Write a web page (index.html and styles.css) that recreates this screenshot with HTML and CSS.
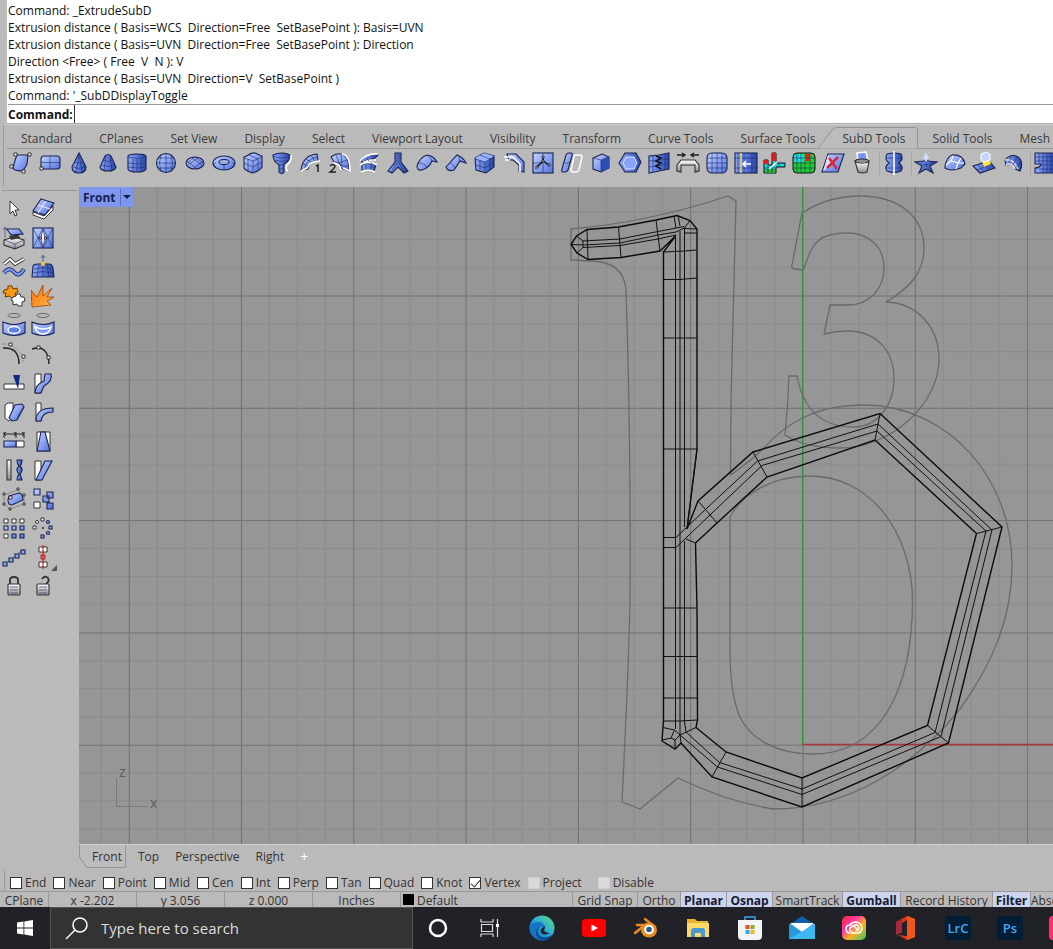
FILE: index.html
```html
<!DOCTYPE html>
<html lang="en">
<head>
    <meta charset="UTF-8">
    <meta name="viewport" content="width=device-width, initial-scale=1.0">
    <title>Rhinoceros - Front</title>
    <link rel="stylesheet" href="styles.css">
</head>
<body>
    <svg class="defs" aria-hidden="true">
        <defs>
            <linearGradient id="blue" x1="0" y1="0" x2="1" y2="1">
                <stop offset="0" stop-color="#c6d4ff"/>
                <stop offset="1" stop-color="#4f72e0"/>
            </linearGradient>
            <linearGradient id="steel" x1="0" y1="0" x2="1" y2="0">
                <stop offset="0" stop-color="#8fa9ff"/>
                <stop offset="1" stop-color="#2746ac"/>
            </linearGradient>
            <linearGradient id="silver" x1="0" y1="0" x2="0" y2="1">
                <stop offset="0" stop-color="#ffffff"/>
                <stop offset="1" stop-color="#8d8d8d"/>
            </linearGradient>
            <linearGradient id="fire" x1="0" y1="0" x2="1" y2="1">
                <stop offset="0" stop-color="#ff6a00"/>
                <stop offset="1" stop-color="#ffb84d"/>
            </linearGradient>
            <linearGradient id="edge" x1="0" y1="1" x2="1" y2="0">
                <stop offset="0" stop-color="#0c59a4"/>
                <stop offset="0.5" stop-color="#2aa9e0"/>
                <stop offset="1" stop-color="#61dc7a"/>
            </linearGradient>
            <linearGradient id="rainbow" x1="0" y1="0" x2="1" y2="1">
                <stop offset="0" stop-color="#ff1f3a"/>
                <stop offset="0.35" stop-color="#ff3ca6"/>
                <stop offset="0.6" stop-color="#ffb020"/>
                <stop offset="1" stop-color="#35c96a"/>
            </linearGradient>
        </defs>
    </svg>

    <div class="command">
        <div class="history">
            <div>Command: _ExtrudeSubD</div>
            <div>Extrusion distance ( Basis=WCS  Direction=Free  SetBasePoint ): Basis=UVN</div>
            <div>Extrusion distance ( Basis=UVN  Direction=Free  SetBasePoint ): Direction</div>
            <div>Direction &lt;Free&gt; ( Free  V  N ): V</div>
            <div>Extrusion distance ( Basis=UVN  Direction=V  SetBasePoint )</div>
            <div>Command: '_SubDDisplayToggle</div>
        </div>
        <div class="prompt">
            <label for="command-line">Command:</label>
            <input id="command-line" type="text">
        </div>
    </div>

    <div class="toolbar">
        <div class="tabs">
            <button>Standard</button>
            <button>CPlanes</button>
            <button>Set View</button>
            <button>Display</button>
            <button>Select</button>
            <button>Viewport Layout</button>
            <button>Visibility</button>
            <button>Transform</button>
            <button>Curve Tools</button>
            <button>Surface Tools</button>
            <button class="active">
                <svg class="tab-shape" viewBox="0 0 100 22" preserveAspectRatio="none"><path d="M0 21.500L14 3Q16 .5 19 .5H97Q99.500 .5 99.500 3V21.500"/></svg>
                <span>SubD Tools</span>
            </button>
            <button>Solid Tools</button>
            <button>Mesh Tools</button>
        </div>
        <div class="tools">
            <button aria-label="Single SubD face"><svg viewBox="0 0 24 24"><path class="b" d="M8 4H19L18 13 14 20Q5 20 4 17Q5 12 8 4Z"/><path class="w" d="M5 2h3v3H5zM19 2h3v3h-3zM1 14h3v3H1zM13 19h3v3h-3z"/></svg></button>
            <button aria-label="SubD plane"><svg viewBox="0 0 24 24"><rect class="b" x="3" y="5" width="19" height="13" rx="3"/><path class="l" d="M12 5V18M3 11.500H22"/><path class="w" d="M2 16h3v3H2z"/></svg></button>
            <button aria-label="SubD cone"><svg viewBox="0 0 24 24"><path class="s" d="M12 2L19 16Q19 22 12 22T5 16Z"/><path class="l" d="M12 3L9 21M12 3L15 21M8 11Q12 13 16 11M6 16Q12 19 18 16"/></svg></button>
            <button aria-label="SubD truncated cone"><svg viewBox="0 0 24 24"><path class="s" d="M9 5Q12 2 15 5L20 16Q19 20 12 20T4 16Z"/><path class="l" d="M10 5L8 19M14 5L16 19M7 9Q12 12 17 9M5 14Q12 17 19 14"/></svg></button>
            <button aria-label="SubD cylinder"><svg viewBox="0 0 24 24"><path class="s" d="M3 5Q4 3 12 3T21 5V18Q20 21 12 21T3 18Z"/><path class="l" d="M3 6Q12 9 21 6M8 8V21M12 8V21M16 8V21M3 12Q12 14 21 12M3 16Q12 18 21 16"/></svg></button>
            <button aria-label="SubD sphere"><svg viewBox="0 0 24 24"><circle class="b" cx="12" cy="12" r="9.500"/><path class="l" d="M12 2V22M2 12H22M7 3Q4 12 7 21M17 3Q20 12 17 21M4 7H20M4 17H20"/></svg></button>
            <button aria-label="SubD ellipsoid"><svg viewBox="0 0 24 24"><ellipse class="b" cx="12" cy="12" rx="9" ry="6"/><path class="l" d="M4 10L14 18M8 6L19 14M20 10L10 18M16 6L5 14M12 6L4 12M12 6L20 12"/></svg></button>
            <button aria-label="SubD torus"><svg viewBox="0 0 24 24"><ellipse class="b" cx="12" cy="12" rx="11" ry="7"/><ellipse cx="12" cy="11" rx="5" ry="2.500" fill="#9fb0e0" stroke="#101a50"/><path class="l" d="M12 14V19M4 12L1 13M20 12L23 13"/></svg></button>
            <button aria-label="SubD box"><svg viewBox="0 0 24 24"><path class="b" d="M4 6Q11 1 14 2L21 5V16Q19 20 11 22Q4 19 3 17V6Z"/><path class="l" d="M3 7L12 10 21 6M12 10V22M3 12L12 16 21 11M8 4L17 8V19M7 8V20"/></svg></button>
            <button aria-label="SubD loft"><svg viewBox="0 0 24 24"><path class="s" d="M3 4Q12 0 20 4Q20 10 14 13V21Q11 24 9 21V14Q3 10 3 4Z"/><path class="l" d="M3 5Q12 9 20 5M5 9Q12 12 18 9M9 14H14M9 18H14"/><path class="h" d="M21 4Q22 9 18 13T18 20"/></svg></button>
            <button aria-label="SubD sweep 1"><svg viewBox="0 0 24 24"><path class="b" d="M2 19Q4 4 18 3L19 10Q11 10 9 18Z"/><path class="l" d="M7 8L14 12M12 4L16 11M4 13L10 15M5 19Q7 8 18 6"/><path class="h" d="M2 20L8 17Q11 10 21 10"/><path d="M17 15l2-1v7" fill="none" stroke="#222" stroke-width="1.500"/></svg></button>
            <button aria-label="SubD sweep 2"><svg viewBox="0 0 24 24"><path class="b" d="M3 6Q8 2 13 3Q21 4 21 20L13 17Q13 11 6 11Z"/><path class="l" d="M8 4L11 12M13 4L14 15M19 9L11 12M21 15H14"/><path class="h" d="M14 3Q22 4 22 20L15 17M5 12Q12 12 13 19"/><path d="M2 15q3-3 5 0q0 2-5 6h6" fill="none" stroke="#222" stroke-width="1.500"/></svg></button>
            <button aria-label="SubD revolve"><svg viewBox="0 0 24 24"><path class="s" d="M4 10Q10 2 21 4L17 8Q9 8 6 12ZM5 14Q12 10 19 14L17 20Q11 17 5 20Z"/><path class="h" d="M3 10Q10 2 21 3M6 12Q12 8 19 9M3 14Q12 9 20 14M4 21Q11 17 18 21"/><path class="l" d="M9 7L12 10M15 5L16 9M9 13V18M14 12V18"/></svg></button>
            <button aria-label="Multipipe"><svg viewBox="0 0 24 24"><path class="s" d="M9 2H15V11L22 20 18 22 12 16 6 22 2 20 9 11Z"/><path class="l" d="M11 2V12L5 21M13 2V12L19 21"/></svg></button>
            <button aria-label="Extend"><svg viewBox="0 0 24 24"><path class="b" d="M2 15Q5 6 12 4Q19 5 22 11L17 10Q14 17 7 19Q2 20 2 15Z"/><path class="l" d="M4 12Q10 12 12 17M12 4Q16 6 17 10"/></svg></button>
            <button aria-label="Offset"><svg viewBox="0 0 24 24"><path class="b" d="M2 16L13 4Q19 6 22 12L16 10 10 19Q4 21 2 16Z"/><path class="l" d="M13 4Q16 6 16 10M6 12Q10 14 11 17"/></svg></button>
            <button aria-label="Box shape"><svg viewBox="0 0 24 24"><path class="s" d="M2 7L11 2 21 5V16L13 22 3 19Z"/><path d="M2 7L11 2 21 5 12 11Z" fill="#9db3ff"/><path class="l" d="M2 8L12 11 21 6M12 11V22M7 9V20M3 14L12 17 21 11M17 8V19M7 4L17 8"/></svg></button>
            <button aria-label="Bevel"><svg viewBox="0 0 24 24"><path class="b" d="M5 3H14L22 11V21L17 20V14L11 9H7Z"/><path class="h" d="M2 6H11L18 13V21M3 9H8"/></svg></button>
            <button aria-label="Insert point"><svg viewBox="0 0 24 24"><rect class="b" x="2" y="2" width="20" height="20"/><path class="l" d="M12 2V10L4 18M12 10L19 15M2 12H12M12 10V22"/><path d="M12 6V10L6 16M12 10L18 14" fill="none" stroke="#111" stroke-width="1.500"/><path class="w" d="M11 5h2v2h-2zM11 9h2v2h-2zM5 15h2v2H5zM17 13h2v2h-2z"/></svg></button>
            <button aria-label="Mirror SubD"><svg viewBox="0 0 24 24"><path d="M14 6Q14 4 16 4H20Q22 4 22 6L19 19Q18 21 16 21H13Q11 21 11 19Z" fill="none" stroke="#fff" stroke-width="1.500"/><path class="b" d="M6 4Q7 2 9 2H11Q13 2 12 5L8 19Q7 21 5 21H3Q1 21 2 18Z"/><path class="l" d="M4 11Q7 14 10 11"/></svg></button>
            <button aria-label="Box"><svg viewBox="0 0 24 24"><path class="b" d="M4 7L13 3 20 6V17L12 21 4 18Z"/><path d="M12 9L20 6V17L12 21Z" fill="#2d4eb8"/><path class="l" d="M4 7L12 9 20 6M12 9V21"/></svg></button>
            <button aria-label="Toggle display"><svg viewBox="0 0 24 24"><path class="s" d="M7 2H18L23 11 18 21H7L1 12Z"/><path d="M8 6H16L19 12 16 18H8L5 12Z" fill="#88a4fa" stroke="#dfe7ff"/></svg></button>
            <button aria-label="Stitch"><svg viewBox="0 0 24 24"><path class="s" d="M2 5L12 4 22 2V18L12 20 2 22Z"/><path class="l" d="M6 4V21M18 3V19M2 10L22 8M2 16L22 13"/><path d="M9 5l5 2-5 3 5 2-5 3 5 3" fill="none" stroke="#111" stroke-width="1.500"/></svg></button>
            <button aria-label="Bridge"><svg viewBox="0 0 24 24"><path d="M1 4H9M15 4H23M6 2L9 4 6 6M18 2L15 4 18 6" fill="none" stroke="#222" stroke-width="1.500"/><path class="g" d="M1 14L5 9H19L23 14V20L19 21V14H5V21L1 20Z"/></svg></button>
            <button aria-label="Subdivide"><svg viewBox="0 0 24 24"><rect class="b" x="2" y="2" width="20" height="20" rx="5"/><path class="l" d="M7 2V22M12 2V22M17 2V22M2 7H22M2 12H22M2 17H22"/></svg></button>
            <button aria-label="Slide edge"><svg viewBox="0 0 24 24"><rect class="s" x="1" y="2" width="22" height="20"/><path class="l" d="M4 2V22M10 2V22M18 2V22M0 7H24M0 17H24"/><path d="M7 2V22" stroke="#e8d850" stroke-width="1.500"/><path class="h" d="M17 13H9M12 10L9 13 12 16"/></svg></button>
            <button aria-label="Show extracted"><svg viewBox="0 0 24 24"><path d="M9 2H13V12H22V16H13V22H1V9H5V14H9Z" fill="#1fd0d4" stroke="#111"/><path d="M9 2H13V10H9ZM1 9H5V13H1Z" fill="#e01c1c"/><path d="M2 18H12V22H2Z" fill="#24b52e"/><path class="l" d="M1 17H12M5 14V22M16 12V16M9 14V22"/><path class="h" d="M6 18L14 11"/></svg></button>
            <button aria-label="Select by color"><svg viewBox="0 0 24 24"><rect x="1" y="2" width="22" height="20" rx="4" fill="#20cc2c" stroke="#111"/><path d="M2 5Q2 3 5 3H12V11H2Z" fill="#22dbd4"/><path d="M13 3H19L17 10H14Z" fill="#e02020"/><path class="l" d="M5 2V22M9 2V22M13 9V22M18 6V22M1 7H23M1 12H23M1 17H23"/></svg></button>
            <button aria-label="Delete face"><svg viewBox="0 0 24 24"><path class="b" d="M7 3H23L17 21H1Z"/><path d="M7 4L2 20 12 12Z" fill="#d7e0ff"/><path d="M8 7L16 18M17 6L6 17" stroke="#e22535" stroke-width="2.500"/></svg></button>
            <button aria-label="Trash"><svg viewBox="0 0 24 24"><path d="M7 2L16 1 18 10H8Z" fill="#7895f5" stroke="#fff" stroke-width="1.500"/><path class="g" d="M5 10H19L17 21Q12 23 8 21Z"/><ellipse cx="12" cy="10" rx="7" ry="2" fill="none" stroke="#222"/></svg></button>
            <button class="after-sep" aria-label="Symmetry"><svg viewBox="0 0 24 24"><path class="s" d="M5 3Q12 1 19 3 22 8 17 12 22 16 19 20 12 23 5 20 2 16 7 12 2 8 5 3Z"/><path class="l" d="M5 7H19M5 17H19"/><path class="h" d="M12 0V24"/></svg></button>
            <button class="after-sep" aria-label="Select star"><svg viewBox="0 0 24 24"><path class="s" d="M12 4L14 10 23 11 16 15 19 22 12 18 5 22 8 15 1 11 10 10Z"/><path class="l" d="M12 14V4M12 14L23 11M12 14L19 22M12 14L5 22M12 14L1 11"/><path d="M12 1L15 7 12 11 9 7Z" fill="#cfdcff"/></svg></button>
            <button aria-label="Quad remesh"><svg viewBox="0 0 24 24"><path class="b" d="M2 15Q4 6 9 4Q20 3 22 13L18 17Q8 21 2 17Z"/><path d="M3 14L8 10 15 12 21 12M8 10L10 5M15 12L13 18M15 12L18 7" fill="none" stroke="#fff" stroke-width="1.200"/></svg></button>
            <button aria-label="Extract face"><svg viewBox="0 0 24 24"><path class="s" d="M1 15L17 10 23 17 8 22Z"/><path class="l" d="M5 19L20 13M6 14L12 21M12 12L18 19"/><path d="M10 10L17 7 19 13 12 16Z" fill="#ffe03a"/><path d="M9 3L14 1 18 3V9L12 11 9 9Z" fill="#c6d4ff" stroke="#fff"/></svg></button>
            <button aria-label="Thicken"><svg viewBox="0 0 24 24"><path class="s" d="M4 9Q10 2 17 6Q23 11 19 20L14 18Q14 12 5 14Z"/><path d="M4 9Q12 7 17 18M5 14Q12 11 14 18" fill="none" stroke="#ddd" stroke-width="1.500"/><path class="l" d="M10 5L8 12M16 6L12 14M20 12L15 16"/></svg></button>
            <button class="after-sep" aria-label="Mesh grid"><svg viewBox="0 0 24 24"><path class="s" d="M2 2H22V22H2V17Q7 17 8 13H2Z"/><path class="l" d="M2 6H22M2 10H22M9 14H22M6 18H22M6 2V12M10 2V22M14 2V22M18 2V22"/></svg></button>
        </div>
    </div>

    <div class="workspace">
        <div class="sidebar">
            <button aria-label="Select"><svg viewBox="0 0 24 24"><path class="w" d="M8 4V17L11 14 13 19 15 18 13 13H17Z"/></svg></button>
            <button aria-label="Layer plane"><svg viewBox="0 0 24 24"><path class="w" d="M2 15L13 19 22 9V13L13 22 2 18Z"/><path class="b" d="M10 2L23 6 14 18 2 14Z"/><path d="M7 8L19 12M15 4L7 16" stroke="#e5ebff" stroke-width="1.200"/></svg></button>
            <button aria-label="Extrude"><svg viewBox="0 0 24 24"><path class="g" d="M2 14L12 11 22 14V19L13 23 2 19Z"/><path class="l" d="M2 14L13 18 22 14M13 18V23"/><path d="M7 10L16 8 18 12 9 14Z" fill="#3a3a3a"/><path class="b" d="M5 3H17L21 8 9 9Z"/><path class="l" d="M3 12V2M1 4L3 1 5 4"/></svg></button>
            <button aria-label="Unweld"><svg viewBox="0 0 24 24"><rect class="b" x="2" y="2" width="20" height="20"/><path class="l" d="M2 22L12 2 22 22M2 2L12 22 22 2M9 12H15"/><path d="M12 3L14 12 12 21 10 12Z" fill="#fff" stroke="#222" stroke-width=".6"/><path class="w" d="M8.500 11h2v2h-2zM13.500 11h2v2h-2z"/></svg></button>
            <button aria-label="Match curves"><svg viewBox="0 0 24 24"><path d="M2 9L8 4 13 9 22 4" fill="none" stroke="#222" stroke-width="3.500"/><path d="M2 9L8 4 13 9 22 4" fill="none" stroke="#fff" stroke-width="2"/><path d="M2 18Q7 11 12 17T22 14" fill="none" stroke="#14235e" stroke-width="4"/><path d="M2 18Q7 11 12 17T22 14" fill="none" stroke="#7894ef" stroke-width="2.500"/></svg></button>
            <button aria-label="Soft move"><svg viewBox="0 0 24 24"><path class="s" d="M2 11Q3 9 7 9H18Q21 9 22 13L23 22H1Z"/><path class="l" d="M3 14Q12 11 21 14M2 18Q12 15 22 18M8 10L6 22M16 10L18 22M12 9V22M12 9V1M10 3L12 0 14 3"/><circle cx="12" cy="9" r="2" fill="#f1cf3d"/></svg></button>
            <button aria-label="Join"><svg viewBox="0 0 24 24"><path d="M2 6L6 5 6 2H10L11 5 15 4 16 8 13 9 14 13 10 14 7 12 3 13 4 9 1 9Z" fill="#f59a17" stroke="#6b3c00"/><path class="w" d="M11 13L14 12 15 10H18L19 13 22 13 23 17 20 18 20 22H16L15 20 11 21 11 17 9 16Z"/></svg></button>
            <button aria-label="Explode"><svg viewBox="0 0 24 24"><path d="M0 6L6 13 12 1 12 12 21 4 16 13 23 13 16 17 20 21 1 23Z" fill="url(#fire)" stroke="#994300" stroke-width=".8"/></svg></button>
            <button aria-label="Cap hole"><svg viewBox="0 0 24 24"><ellipse cx="12" cy="2.500" rx="6" ry="2" fill="none" stroke="#666"/><path class="b" d="M1 9Q12 14 23 9V20Q12 25 1 20Z"/><ellipse cx="12" cy="17" rx="6" ry="3.500" fill="#5f80ea" stroke="#fff" stroke-width="1.500"/></svg></button>
            <button aria-label="Fill hole"><svg viewBox="0 0 24 24"><ellipse cx="12" cy="2.500" rx="6" ry="2" fill="none" stroke="#666"/><path class="b" d="M1 9Q12 14 23 9V20Q12 25 1 20Z"/><path d="M4 14Q12 18 20 14Q18 21 12 21T4 14Z" fill="#7f9bf5" stroke="#fff" stroke-width="1.500"/></svg></button>
            <button aria-label="Control points"><svg viewBox="0 0 24 24"><path d="M1 6Q17 5 17 22" fill="none" stroke="#222" stroke-width="1.500"/><path d="M0 2H9L21 14V20" fill="none" stroke="#888" stroke-dasharray="2 1"/><path class="w" d="M7 1h3v3H7zM20 13h3v3h-3z"/></svg></button>
            <button aria-label="Edit points"><svg viewBox="0 0 24 24"><path d="M1 7Q17 2 18 22" fill="none" stroke="#222" stroke-width="1.500"/><path class="w" d="M6 4h3v3H6zM16 14h3v3h-3z"/></svg></button>
            <button aria-label="Trim"><svg viewBox="0 0 24 24"><path class="w" d="M2 13H22V18H2Z"/><path d="M11 4H18L16 18Z" fill="#0d2a86"/></svg></button>
            <button aria-label="Split"><svg viewBox="0 0 24 24"><path class="w" d="M4 3H10V22H4Z"/><path class="b" d="M14 3H20Q22 10 13 15L10 22H4Q4 14 13 10Z"/></svg></button>
            <button aria-label="Rotate"><svg viewBox="0 0 24 24"><path class="w" d="M3 5L6 3H11V17L7 21 3 18Z"/><path class="b" d="M13 5L20 4 22 7 15 20 10 21 7 18Z"/><path class="l" d="M15 20L16 16 22 6"/></svg></button>
            <button aria-label="Bend"><svg viewBox="0 0 24 24"><path class="w" d="M5 3H10V21H5Z"/><path class="b" d="M5 21Q5 8 22 8V12Q11 12 10 21Z"/></svg></button>
            <button aria-label="Stretch"><svg viewBox="0 0 24 24"><path d="M2 3V9M14 3V9M22 3V9M2 5H22M4 3L2 5 4 7M12 3L14 5 12 7M20 3L22 5 20 7" fill="none" stroke="#222"/><path class="w" d="M14 12H22V18H14Z"/><path class="b" d="M2 12H14V18H2Z"/></svg></button>
            <button aria-label="Taper"><svg viewBox="0 0 24 24"><path class="w" d="M6 3H19V22H6Z"/><path class="b" d="M10 3H14L19 22H6Z"/></svg></button>
            <button aria-label="Twist"><svg viewBox="0 0 24 24"><path class="g" d="M5 2H9V22H5Z"/><path class="s" d="M15 2H20Q20 6 18 8 22 12 18 16L20 22H15Q15 18 17 16 13 12 17 8Q15 6 15 2Z"/></svg></button>
            <button aria-label="Shear"><svg viewBox="0 0 24 24"><path class="w" d="M4 3H10V22H4Z"/><path class="b" d="M14 3H21L11 22H5Z"/></svg></button>
            <button aria-label="Cage edit"><svg viewBox="0 0 24 24"><path d="M2 8L16 3 22 8V17L8 22 2 17Z" fill="none" stroke="#888"/><path class="b" d="M7 9L17 6Q21 7 21 13L10 18Q6 18 6 13Z"/><path class="w" d="M1 6h2v2H1zM15 1h2v2h-2zM21 7h2v2h-2zM1 16h2v2H1zM7 21h2v2H7zM21 16h2v2h-2zM7 9h3v3H7z"/></svg></button>
            <button aria-label="Copy"><svg viewBox="0 0 24 24"><path class="b" d="M3 2h6v6H3zM16 5h6v6h-6zM12 9h6v6h-6zM16 16h6v6h-6z"/><path class="w" d="M3 15h6v6H3z"/></svg></button>
            <button aria-label="Array"><svg viewBox="0 0 24 24"><path class="w" d="M2 3h4v4H2zM10 3h4v4h-4zM18 3h4v4h-4zM2 18h4v4H2z"/><path class="b" d="M2 10h4v4H2zM10 10h4v4h-4zM18 10h4v4h-4zM10 18h4v4h-4zM18 18h4v4h-4z"/></svg></button>
            <button aria-label="Polar array"><svg viewBox="0 0 24 24"><path class="w" d="M2 10h3v3H2zM10 2h3v3h-3z"/><circle class="w" cx="6" cy="6" r="1.500"/><path class="b" d="M18 10h3v3h-3zM10 19h3v3h-3z"/><circle class="b" cx="17" cy="6" r="1.500"/><circle class="b" cx="17" cy="17" r="1.500"/><circle cx="12" cy="12" r="1" fill="#222"/></svg></button>
            <button aria-label="Array along curve"><svg viewBox="0 0 24 24"><path class="l" d="M2 20L22 4"/><path class="b" d="M1 17h4v4H1zM7 13h4v4H7zM13 9h4v4h-4zM19 5h4v4h-4z"/></svg></button>
            <button class="flyout" aria-label="Align"><svg viewBox="0 0 24 24"><path class="w" d="M8 2h8v5H8zM8 17h8v5H8z"/><path d="M10 10h4v4h-4z" fill="#e09090" stroke="#a22"/><path d="M12 0V24" stroke="#d21d1d" stroke-width="1.200"/></svg></button>
            <button aria-label="Lock"><svg viewBox="0 0 24 24"><path d="M8 11V6Q8 3 12 3T16 6V11" fill="none" stroke="#333" stroke-width="1.800"/><rect class="g" x="6" y="10" width="12" height="11" rx="1"/><path class="l" d="M8 13H16M8 16H16M8 19H16"/></svg></button>
            <button aria-label="Unlock"><svg viewBox="0 0 24 24"><path d="M11 5Q14 1 17 4Q19 7 15 10" fill="none" stroke="#333" stroke-width="1.800"/><rect class="g" x="6" y="10" width="12" height="11" rx="1"/><path class="l" d="M8 13H16M8 16H16M8 19H16"/></svg></button>
        </div>

        <div class="view">
            <div class="viewport">
                <svg class="scene" viewBox="79 187 974 657" preserveAspectRatio="xMinYMin slice">
                    <defs>
                        <pattern id="grid" x="128.700" y="183.200" width="112.300" height="112.300" patternUnits="userSpaceOnUse">
                            <path d="M28.500 0V113M56.500 0V113M84.500 0V113M0 28.500H113M0 56.500H113M0 84.500H113" stroke="#898989"/>
                            <path d="M.5 0V113M0 .5H113" stroke="#707070"/>
                        </pattern>
                    </defs>
                    <rect x="79" y="187" width="974" height="657" fill="url(#grid)"/>
                    <path d="M802.500 187V745" stroke="#2f9437"/>
                    <path d="M802.500 744.500H1053" stroke="#b03636" stroke-width="1.300"/>

                    <!-- lettering outlines -->
                    <g class="outline">
                        <path d="M571 260V229Q650 222 728 196L736 201 731 400 730.500 475Q748 463 762 450C788 420 820 405 863 405C950 405 1012 480 1012 565C1012 615 995 660 960 709C915 765 850 809 773 809C735 803 705 791 678 778L640 809 622 802C625 740 629 660 630 600Q631 440 626 290Q624 262 592 261Z"/>
                        <path d="M730 650V517C743 492 775 476 810 476C872 476 912 535 912.500 600C912.500 690 880 754 813 754C775 754 749 738 739 715C732 697 730 675 730 650Z"/>
                        <path d="M802 213Q828 196 860 196C898 196 924 216 924 248C924 272 910 288 886 302C918 303 939 328 939 359C939 405 890 448 840 448Q805 448 785 435Q788 405 789 376H797C803 408 820 427 853 427C878 427 894 405 894 379C894 350 876 331 847 331Q835 331 824 334L830 305H848C870 305 884 288 884 268C884 246 868 233 847 233C820 233 812 242 805 266Q804 270 802 270L794 269Q791 268 792 265Z"/>
                    </g>

                    <!-- SubD cage -->
                    <g class="cage">
                        <path d="M697 449V229L690 220.500 677 215.500 656 220 618.500 227 587 229.500 576.500 236 571 244.500 577 253 588 259.500 621 257.500 660 251 675.500 236 663.500 252V720L662 741 675 749 681 743 712 777 802 807 948.500 743 1002 527 880 413.500 753 452 698 501 687 529Z"/>
                        <path d="M696 727.500L697.500 720 697 608 695.500 543 717 523 767 477 875 440 976.500 533.500 927.500 725.500 802 778 726 752Z"/>
                    </g>
                    <g class="wire">
                        <path d="M571 244.500L583 245 620 243 658 235 676 232 684 228M583 241L620 239 658 231.500 684 226.500M583 247.500L620 245.500 658 239 676 235M576.500 236L583 241V247.500L577 253M587 229.500L588 259.500M618.500 227L621 257.500M656 220L660 251M674 216L676 228M678 215.500L680 226M690 220.500L684 228.500 697 229M684 233H697M660 251L675.500 236"/>
                        <path d="M675.500 235V729M680 231V735M684.500 227V527M684.500 541V722L686 732"/>
                        <path d="M663.500 252L684 251 697 250M663.500 279.500H680L697 278M663.500 338H697M663.500 449H697M663.500 608H697M663.500 656.500H697M663.500 698H697M663 721H680L697 720"/>
                        <path d="M663.500 537.500H676L707 508 757.500 461 878 424 992 530 941 736.500 802 794.500 717.500 767 680 735"/>
                        <path d="M663.500 547.500H676L711 514 762 465.500 877 431 986 531 935 732.500 802 789 719.500 762.500 686 732"/>
                        <path d="M695.500 543L686 539M698 501L706 510 717 523M753 452L767 477M880 413.500L875 440M1002 527L976.500 533.500M948.500 743L927.500 725.500M802 778V807M726 752L712 777M696 727.500L680 735 681 743M663 727.500L674.500 730 680 735 675 740V749M662 740L671 738 675 740M674.500 730L671 738"/>
                        <path d="M697 449L687 529"/>
                    </g>

                    <g class="axis">
                        <path d="M116.500 778V806.500H148"/>
                        <text x="119" y="777">z</text>
                        <text x="150" y="808">x</text>
                    </g>
                </svg>
                <button class="view-title"><span>Front</span><i></i></button>
            </div>
            <div class="view-tabs">
                <button class="active">
                    <svg class="tab-shape" viewBox="0 0 47 24" preserveAspectRatio="none"><path d="M.5 0V12L8 22.500H46.500V0"/></svg>
                    <span>Front</span>
                </button>
                <button>Top</button>
                <button>Perspective</button>
                <button>Right</button>
                <button class="add">+</button>
            </div>
        </div>
    </div>

    <div class="osnaps">
        <label><input type="checkbox">End</label>
        <label><input type="checkbox">Near</label>
        <label><input type="checkbox">Point</label>
        <label><input type="checkbox">Mid</label>
        <label><input type="checkbox">Cen</label>
        <label><input type="checkbox">Int</label>
        <label><input type="checkbox">Perp</label>
        <label><input type="checkbox">Tan</label>
        <label><input type="checkbox">Quad</label>
        <label><input type="checkbox">Knot</label>
        <label><input type="checkbox" checked>Vertex</label>
        <label><input type="checkbox" disabled>Project</label>
        <label class="last"><input type="checkbox" disabled>Disable</label>
    </div>

    <div class="status">
        <button class="cplane">CPlane</button>
        <span class="coord">x -2.202</span>
        <span class="coord">y 3.056</span>
        <span class="coord">z 0.000</span>
        <span class="coord">Inches</span>
        <button class="layer"><i></i>Default</button>
        <button class="grid-snap">Grid Snap</button>
        <button class="ortho">Ortho</button>
        <button class="planar on">Planar</button>
        <button class="planar on">Osnap</button>
        <button class="smart">SmartTrack</button>
        <button class="gumball on">Gumball</button>
        <button class="record">Record History</button>
        <button class="filter on">Filter</button>
        <span class="rest">Absolute tolerance</span>
    </div>

    <div class="taskbar">
        <button class="start" aria-label="Start"><svg viewBox="0 0 16 16"><path d="M0 2.500L6.500 1.500V7.600H0ZM7.300 1.400L16 0V7.600H7.300ZM0 8.400H6.500V14.500L0 13.500ZM7.300 8.400H16V16L7.300 14.600Z" fill="#fff"/></svg></button>
        <div class="search">
            <svg viewBox="0 0 24 24"><circle cx="15" cy="9" r="7" fill="none" stroke="#fff" stroke-width="1.500"/><path d="M10 14L1 23" stroke="#fff" stroke-width="1.500"/></svg>
            <input type="text" placeholder="Type here to search" aria-label="Search">
        </div>
        <div class="apps">
            <button aria-label="Cortana"><svg viewBox="0 0 26 26"><circle cx="13" cy="13" r="8" fill="none" stroke="#fff" stroke-width="2.500"/></svg></button>
            <button aria-label="Task view"><svg viewBox="0 0 26 26"><path d="M4 4V7H16V4M4 22V19H16V22M4.500 9.500H15.500V16.500H4.500ZM20.500 4V22" fill="none" stroke="#ddd" stroke-width="1.200"/><path d="M19 9h3v3h-3z" fill="#fff"/></svg></button>
            <button aria-label="Edge"><svg viewBox="0 0 26 26"><circle cx="13" cy="13" r="12.500" fill="url(#edge)"/><path d="M.5 13Q3 6 10 7Q16 8 16 13Q14 11 11 12Q8 15 10 20Q13 25 17 25Q3 27 .5 13Z" fill="#1574c4"/><path d="M11 12Q7 16 10 20Q15 25 24 19Q20 25 14 25.500Q6 24 7 17Q8 13 11 12Z" fill="#0d4f95"/><path d="M16 11Q16 14 15 15Q16 18 21 18Q16 21 12 18Q10 14 16 11Z" fill="#23252b"/></svg></button>
            <button aria-label="YouTube"><svg viewBox="0 0 26 26"><rect x="1" y="4" width="24" height="18" rx="4" fill="#f00"/><path d="M10.500 9.500L17 13 10.500 16.500Z" fill="#fff"/></svg></button>
            <button aria-label="Blender"><svg viewBox="0 0 26 26"><path d="M12 4L22 12M4 10H17M2 18L12 10" stroke="#ea8a1f" stroke-width="2.500" stroke-linecap="round"/><ellipse cx="16" cy="15" rx="8" ry="7.500" fill="#ea8a1f"/><circle cx="16" cy="14.500" r="4.800" fill="#fff"/><circle cx="16" cy="14.500" r="2.800" fill="#265787"/></svg></button>
            <button aria-label="Files"><svg viewBox="0 0 26 26"><path d="M2 4H10L12 6H23V22H2Z" fill="#eab530"/><path d="M2 8H24V22H2Z" fill="#fbd96b"/><path d="M6 22V16Q6 13 9 13H18Q20 13 20 16V22H16V18H10V22Z" fill="#4b97cf"/></svg></button>
            <button aria-label="Store"><svg viewBox="0 0 26 26"><path d="M8 6V2H18V6" fill="none" stroke="#35a9e4" stroke-width="1.500"/><path d="M1 5H25V21Q25 25 21 25H5Q1 25 1 21Z" fill="#f4f4f4"/><path d="M8.500 10H12.500V14H8.500Z" fill="#e2532c"/><path d="M13.500 10H17.500V14H13.500Z" fill="#7cb32b"/><path d="M8.500 15H12.500V19H8.500Z" fill="#32a5e6"/><path d="M13.500 15H17.500V19H13.500Z" fill="#f5b51f"/></svg></button>
            <button aria-label="Mail"><svg viewBox="0 0 26 26"><path d="M0 10L13 1 26 10Z" fill="#0f5fa8"/><path d="M0 9H26V24H0Z" fill="#32ade8"/><path d="M1 8H25L13 17Z" fill="#fff"/><path d="M0 9L13 17 0 24Z" fill="#2799d9"/><path d="M26 9L0 24H26Z" fill="#3db8f0"/></svg></button>
            <button aria-label="Creative Cloud"><svg viewBox="0 0 26 26"><rect x="1" y="1" width="24" height="24" rx="5" fill="url(#rainbow)"/><path d="M9 18Q5 18 5 14T9 10Q11 7 15 7Q21 8 21 14 20 18 16 18H12Q8 16 9 13 12 9 15 13L17 15M10 18H17M11 12Q16 7 18 13 18 16 15 15" fill="none" stroke="#fff" stroke-width="1.500"/></svg></button>
            <button aria-label="Office"><svg viewBox="0 0 26 26"><path d="M3 7L14 1 22 4V22L14 25 5 20 14 21V5L9 8V17L3 20Z" fill="#d83b12"/><path d="M14 1L22 4V22L14 25Z" fill="#f0551c"/><path d="M3 7L9 4V17L3 20Z" fill="#a92a3c"/></svg></button>
            <button class="adobe">LrC</button>
            <button class="adobe">Ps</button>
            <button class="adobe pink" aria-label="InDesign"></button>
        </div>
    </div>
</body>
</html>
```

FILE: styles.css
```css
* {
    box-sizing: border-box;
}
body {
    margin: 0;
    height: 100vh;
    display: flex;
    flex-direction: column;
    overflow: hidden;
    background: #bababa;
    color: #333;
    font-family: "Open Sans", "Noto Sans", sans-serif;
    font-size: 12px;
}
button, input {
    font: inherit;
    color: inherit;
}
button {
    margin: 0;
    padding: 0;
    border: none;
    background: none;
    white-space: nowrap;
}
svg {
    display: block;
}
.defs {
    position: absolute;
    width: 0;
    height: 0;
}

/* command history and prompt */
.command {
    height: 124px;
    flex: none;
    margin-left: 7px;
    padding-left: 1px;
    background: #fff;
    color: #111;
    border-bottom: 1px solid #aaa;
}
.history {
    height: 104px;
    padding-top: 2px;
    display: grid;
    grid-auto-rows: 1fr;
    line-height: 17px;
    white-space: pre;
}
.prompt {
    height: 19px;
    display: flex;
    border-top: 1px solid #999;
}
.prompt label {
    font-weight: bold;
    line-height: 19px;
    padding-right: 1px;
}
.prompt input {
    flex: 1;
    border: none;
    border-left: 1px solid #333;
    outline: none;
    padding: 0 2px;
}

/* toolbar tabs and icons */
.toolbar {
    height: 63px;
    flex: none;
    margin-left: 3px;
    padding-top: 3px;
    border-left: 1px solid #9c9c9c;
    border-top: 1px solid #cfcfcf;
    overflow: hidden;
}
.tabs {
    display: flex;
    gap: 27px;
    height: 21px;
    padding-left: 14px;
    margin-left: 3px;
    border-bottom: 1px solid #999;
    color: #3a3a3a;
}
.tabs button {
    flex: none;
    position: relative;
    height: 20px;
}
.tabs span, .view-tabs span {
    position: relative;
}
.tab-shape {
    position: absolute;
    fill: #bcbcbc;
    stroke: #949494;
}
.tabs .tab-shape {
    left: -25px;
    top: -1px;
    width: 100px;
    height: 22px;
}
.tools {
    display: flex;
    gap: 5px;
    padding: 2px 0 0 5px;
}
.tools button {
    flex: none;
    width: 24px;
    height: 24px;
}
.tools .after-sep {
    box-sizing: content-box;
    padding-left: 2px;
    border-left: 1px solid #a5a5a5;
}
.tools svg, .sidebar svg {
    width: 24px;
    height: 24px;
}
.b, .s, .w, .g {
    stroke: #1a2350;
    stroke-width: 1.1;
}
.b {
    fill: url(#blue);
}
.s {
    fill: url(#steel);
}
.w {
    fill: #fff;
    stroke: #222;
    stroke-width: 0.9;
}
.g {
    fill: url(#silver);
    stroke: #333;
}
.l {
    fill: none;
    stroke: #1c2c6b;
    stroke-width: 0.6;
}
.h {
    fill: none;
    stroke: #fff;
    stroke-width: 1.6;
}

/* side tools and viewport */
.workspace {
    flex: 1;
    min-height: 0;
    display: flex;
}
.sidebar {
    width: 76px;
    flex: none;
    margin: 3px 1px 0 2px;
    padding-top: 6px;
    border-top: 1px solid #999;
    display: grid;
    grid-template-columns: 24px 24px;
    grid-auto-rows: 24px;
    gap: 5px;
    align-content: start;
}
.sidebar button {
    position: relative;
}
.flyout::after {
    content: "";
    position: absolute;
    right: -2px;
    bottom: -2px;
    border-left: 6px solid transparent;
    border-bottom: 6px solid #555;
}
.view {
    flex: 1;
    min-width: 0;
    display: flex;
    flex-direction: column;
}
.viewport {
    flex: 1;
    min-height: 0;
    position: relative;
    background: #969696;
}
.scene {
    width: 100%;
    height: 100%;
}
.outline {
    fill: none;
    stroke: #6a6a6a;
    stroke-width: 1.3;
    stroke-linejoin: round;
}
.cage {
    fill: none;
    stroke: #0b0b0b;
    stroke-width: 1.4;
}
.wire {
    fill: none;
    stroke: #111;
    stroke-width: 1;
}
.axis path {
    fill: none;
    stroke: #7a7a7a;
}
.axis text {
    font-size: 14px;
    fill: #5e5e5e;
}
.view-title {
    position: absolute;
    left: 0;
    top: 0;
    height: 20px;
    display: flex;
    align-items: center;
    background: #7f96ee;
    color: #16204d;
    font-weight: bold;
}
.view-title span {
    padding: 0 4px;
    border-right: 1px solid #5d70b8;
}
.view-title i {
    margin: 0 2px;
    border: 4px solid transparent;
    border-top-color: #16204d;
    border-bottom: none;
}
.view-tabs {
    height: 26px;
    flex: none;
    display: flex;
    gap: 16px;
    border-top: 1px solid #d0d0d0;
}
.view-tabs button {
    position: relative;
    height: 23px;
}
.view-tabs .active {
    padding-left: 13px;
}
.view-tabs .tab-shape {
    left: 0;
    top: 0;
    width: 47px;
    height: 24px;
}
.view-tabs .add {
    color: #fff;
    font-size: 14px;
}

/* object snaps */
.osnaps {
    height: 21px;
    flex: none;
    display: flex;
    gap: 7px;
    margin-left: 4px;
    padding-left: 5px;
    padding-top: 4px;
    border-left: 1px solid #999;
}
.osnaps label {
    display: flex;
    align-items: center;
    gap: 3px;
}
.osnaps .last {
    margin-left: 9px;
}
.osnaps input {
    appearance: none;
    width: 12px;
    height: 12px;
    margin: 0;
    background: #fff;
    border: 1px solid #333;
}
.osnaps input:checked {
    display: flex;
    justify-content: center;
}
.osnaps input:checked::before {
    content: "";
    width: 4px;
    height: 8px;
    border: solid #333;
    border-width: 0 1px 1px 0;
    transform: rotate(40deg);
}
.osnaps input:disabled {
    background: #dadada;
    border-color: #cfcfcf;
}

/* status bar */
.status {
    height: 16px;
    flex: none;
    display: flex;
    border-top: 1px solid #9a9a9a;
    line-height: 17px;
}
.status > * {
    flex: none;
    text-align: center;
    border-right: 1px solid #999;
}
.cplane {
    width: 49px;
}
.coord {
    width: 88px;
}
.status .layer {
    flex: 1;
    display: flex;
    gap: 3px;
    padding-left: 2px;
}
.layer i {
    width: 11px;
    height: 11px;
    margin-top: 2px;
    background: #000;
}
.grid-snap {
    width: 65px;
}
.ortho {
    width: 43px;
}
.planar {
    width: 46px;
}
.smart {
    width: 70px;
}
.gumball {
    width: 58px;
}
.record {
    width: 92px;
}
.filter {
    width: 38px;
}
.status .on {
    background: #cdd5ee;
    color: #161a33;
    font-weight: bold;
}
.status .rest {
    width: 22px;
    border: none;
    text-align: left;
    white-space: nowrap;
}

/* taskbar */
.taskbar {
    height: 42px;
    flex: none;
    display: flex;
    background: #202228;
    color: #fff;
    overflow: hidden;
}
.start {
    flex: none;
    width: 50px;
    padding-left: 17px;
}
.start svg {
    width: 16px;
    height: 16px;
}
.search {
    flex: none;
    width: 363px;
    display: flex;
    align-items: center;
    gap: 12px;
    padding-left: 14px;
    background: #333;
    border: 1px solid #555;
}
.search svg {
    width: 24px;
    height: 24px;
}
.search input {
    flex: 1;
    border: none;
    outline: none;
    padding: 0;
    background: none;
    font-size: 15px;
}
.search input::placeholder {
    color: #ddd;
}
.apps {
    display: flex;
    align-items: center;
    gap: 26px;
    padding-left: 12px;
}
.apps button, .apps svg {
    flex: none;
    width: 26px;
    height: 26px;
}
.apps .adobe {
    height: 24px;
    border-radius: 4px;
    background: #001e36;
    color: #45a8f5;
    font-size: 13px;
    font-weight: 600;
}
.apps .pink {
    background: #ff2d6b;
}
```
